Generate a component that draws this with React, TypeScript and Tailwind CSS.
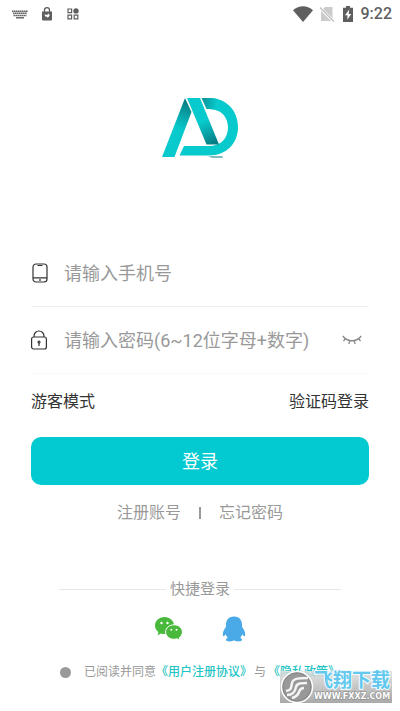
import { useState } from 'react';

function StatusBar() {
  return (
    <header className="flex h-7 items-center justify-between pr-2 pl-3 text-[#5f5f5f]">
      <div className="flex items-center gap-3">
        <svg width="16" height="9" viewBox="0 0 16 9" fill="none" stroke="currentColor" aria-hidden="true">
          <path d="M0 1.2h16M1 3.3h14M1.5 5.4h13" strokeWidth="1.5" strokeDasharray="1.6 .4" />
          <path d="M4 7.8h8" strokeWidth="1.4" />
        </svg>
        <svg width="12" height="14" viewBox="0 0 12 14" aria-hidden="true" className="ml-px">
          <path d="M3.5 5V3.2a2.5 2.5 0 0 1 5 0V5" fill="none" stroke="currentColor" strokeWidth="1.3" />
          <path d="M1 4.5h10V12.4a1 1 0 0 1-1 1H2a1 1 0 0 1-1-1z" fill="currentColor" />
          <path d="M3.5 7.2 6 8l1.6-1.4 1.2 2L6.7 11 6 9.8 4.2 9.4z" fill="#fff" />
        </svg>
        <svg width="12" height="12" viewBox="0 0 12 12" fill="none" stroke="currentColor" strokeWidth="1.2" aria-hidden="true" className="ml-0.5">
          <path d="M1 1h3.6v3.6H1zM1 7.2h3.6v3.6H1zM7.2 7.2h3.6v3.6H7.2z" />
          <circle cx="9" cy="2.9" r="2.7" fill="currentColor" stroke="none" />
        </svg>
      </div>
      <div className="flex items-center">
        <svg width="20" height="16" viewBox="0 0 20 16" fill="currentColor" aria-hidden="true">
          <path d="M0 4.2C6-1 14-1 20 4.2L10 16z" />
        </svg>
        <svg width="16" height="16" viewBox="0 0 16 16" aria-hidden="true" className="ml-1.5">
          <path d="M6 1h7.5v14H2V5z" fill="#cbcbcb" />
          <path d="M.5 1.5 15 15.5" stroke="#fff" strokeWidth="3" />
          <path d="M1 1.5 15 15.5" stroke="#bdbdbd" strokeWidth="1.3" />
        </svg>
        <svg width="10" height="16" viewBox="0 0 10 16" aria-hidden="true" className="ml-2">
          <path d="M3 0h4v1.7h3V16H0V1.7h3z" fill="currentColor" />
          <path d="M6.2 3.5 2 9.2h2.4v4.5L8.2 8H5.7z" fill="#fff" />
        </svg>
        <time className="ml-2 text-base leading-5 font-medium">9:22</time>
      </div>
    </header>
  );
}

function Logo() {
  return (
    <svg width="76" height="60" viewBox="0 0 76 60" role="img" aria-label="AD" className="mx-auto">
      <defs>
        <linearGradient id="leftLeg" gradientUnits="userSpaceOnUse" x1="28" y1="6" x2="17" y2="30">
          <stop offset="0" stopColor="#087f84" />
          <stop offset="1" stopColor="#08c9cb" />
        </linearGradient>
        <linearGradient id="rightLeg" gradientUnits="userSpaceOnUse" x1="40" y1="24" x2="50" y2="47">
          <stop offset="0" stopColor="#08c9cb" />
          <stop offset="1" stopColor="#067b81" />
        </linearGradient>
        <linearGradient id="bowl" gradientUnits="userSpaceOnUse" x1="42" y1="6" x2="54" y2="8">
          <stop offset="0" stopColor="#0a9a9f" />
          <stop offset="1" stopColor="#08c9cb" />
        </linearGradient>
      </defs>
      <path d="M47 0C65 0 76 13 76 29S65 57.5 47 57.5H17.5L22 48H47C59 48 66 40 66 29.5S59 11 47 11z" fill="#08c9cb" />
      <path d="M39.5 0H47Q52 0 56 1.2V12.5Q52 11 47 11H44.5z" fill="url(#bowl)" />
      <path d="M23 0 0 59H12.5L29.5 14z" fill="url(#leftLeg)" />
      <path d="M25 0H38L57 46.500H44.5z" fill="url(#rightLeg)" />
      <path d="M46 58.5H60.5L61 59.5H50z" fill="#067b81" />
    </svg>
  );
}

function PhoneIcon() {
  return (
    <svg width="16" height="20" viewBox="0 0 16 20" fill="none" stroke="#333" strokeWidth="1.2" aria-hidden="true">
      <rect x="1" y="1" width="14" height="18" rx="3" />
      <path d="M1 14.8h14M5.5 2.5h5M8 16v2" />
    </svg>
  );
}

function LockIcon() {
  return (
    <svg width="16" height="20" viewBox="0 0 16 20" fill="none" stroke="#333" strokeWidth="1.2" aria-hidden="true">
      <rect x="0.6" y="7" width="14.8" height="12" rx="2" />
      <path d="M3 7V6a5 5 0 0 1 10 0v1M8 13v3" />
      <circle cx="8" cy="12" r="1" />
    </svg>
  );
}

function ClosedEyeIcon() {
  return (
    <svg width="20" height="10" viewBox="0 0 20 10" fill="none" stroke="#888" strokeWidth="1.3" aria-hidden="true">
      <path d="M.8 1C5.5 7.3 14.5 7.3 19.2 1M3.5 3.5 1.5 6M7.6 5.5 7 9M12.4 5.5 13 9M16.5 3.5l2 2.5" />
    </svg>
  );
}

function WeChatIcon() {
  return (
    <svg width="28" height="24" viewBox="0 0 28 24" aria-hidden="true">
      <path d="M9.5 0C4.3 0 0 3.7 0 8.4c0 2.700 1.300 5 3.500 6.600L2.500 18.300l3.600-1.900c1.200.4 2.300.5 3.400.5C14.700 16.900 19 13.100 19 8.400S14.700 0 9.500 0z" fill="#48b93b" />
      <path d="M19 7.800c-4.600 0-8.400 3.200-8.400 7.200s3.800 7.300 8.400 7.300c1 0 2-.2 2.900-.5l3 1.700-.8-2.700c2-1.300 3.300-3.400 3.300-5.800 0-4-3.800-7.200-8.400-7.200z" fill="#48b93b" stroke="#fff" strokeWidth="1" />
      <g fill="#fff">
        <circle cx="6.5" cy="6" r="1.2" />
        <circle cx="12.5" cy="6" r="1.2" />
        <circle cx="16.3" cy="12.700" r="1" />
        <circle cx="21.5" cy="12.700" r="1" />
      </g>
    </svg>
  );
}

function QQIcon() {
  return (
    <svg width="24" height="26" viewBox="0 0 24 26" fill="#4aaae8" aria-hidden="true">
      <path d="M12 .5c-5 0-8 3.5-8 8v2.3C2.2 13.300.8 16 .8 18.300c0 1.200.3 1.900.8 1.900.7 0 1.500-.9 2.200-1.900.3 1.500 1 2.800 2 3.800-1.200.4-1.900 1-1.900 1.700 0 1.100 1.700 1.700 4 1.700 1.800 0 3.300-.5 4.100-1.200.8.7 2.300 1.200 4.100 1.200 2.300 0 4-.6 4-1.700 0-.7-.7-1.300-1.900-1.700 1-1 1.700-2.300 2-3.800.7 1 1.500 1.900 2.200 1.900.5 0 .8-.7.8-1.900 0-2.300-1.400-5-3.200-7.500V8.500c0-4.500-3-8-8-8z" />
    </svg>
  );
}

function Watermark() {
  return (
    <div className="absolute right-2 bottom-2 flex h-8 w-28 items-center bg-linear-to-b from-[#dedede]/80 to-[#a9a9a9]">
      <svg width="34" height="34" viewBox="0 0 34 34" aria-hidden="true" className="shrink-0">
        <circle cx="17" cy="17" r="15.5" fill="#999" stroke="#fff" strokeWidth="1.5" />
        <circle cx="17" cy="17" r="14" fill="none" stroke="#888" strokeWidth="1" />
        <path d="M28 8c-8 0-15 0-16 5-1 4 0 7-6 8M27 13c-6 0-10 0-11 4-1 5-3 8-9 8M24 18c-4 0-4 2-5 4-1 3-3 5-7 6" fill="none" stroke="#f4f4f4" strokeWidth="2.5" />
      </svg>
      <div className="flex flex-col">
        <span className="text-[19px] leading-5 font-bold whitespace-nowrap text-[#62c8ee] [paint-order:stroke] [-webkit-text-stroke:2px_#f3fbff]">飞翔下载</span>
        <span className="font-['DejaVu_Sans',sans-serif] text-[8px] leading-3 font-bold text-white [paint-order:stroke] [-webkit-text-stroke:1px_#888]">WWW.FXXZ.COM</span>
      </div>
    </div>
  );
}

export default function App() {
  const [visible, setVisible] = useState(false);
  const field = 'h-full min-w-0 flex-1 bg-transparent text-lg text-[#333] outline-none placeholder:text-[#999]';

  return (
    <div className="relative min-h-screen bg-white font-[Roboto,'Noto_Sans_CJK_SC',sans-serif] text-[#999]">
      <StatusBar />
      <main className="px-[31px] pt-[70px]">
        <Logo />
        <form className="mt-[82px]" onSubmit={(event) => event.preventDefault()}>
          <div className="flex h-[67px] items-center gap-4 border-b border-[#f0f0f0]">
            <label htmlFor="phone" aria-label="手机号" className="pl-px"><PhoneIcon /></label>
            <input id="phone" type="tel" placeholder="请输入手机号" className={field} />
          </div>
          <div className="flex h-[67px] items-center gap-4 border-b border-[#f8f8f8]">
            <label htmlFor="password" aria-label="密码" className="pr-px"><LockIcon /></label>
            <input id="password" type={visible ? 'text' : 'password'} placeholder="请输入密码(6~12位字母+数字)" className={field} />
            <button type="button" aria-label="显示密码" onClick={() => setVisible(!visible)} className="pr-[7px]">
              <ClosedEyeIcon />
            </button>
          </div>
          <div className="flex h-14 items-center justify-between text-base text-[#333]">
            <a href="#guest">游客模式</a>
            <a href="#code">验证码登录</a>
          </div>
          <button type="submit" className="mt-[7px] h-12 w-full rounded-[10px] bg-[#02cad0] pt-0.5 text-lg text-white">登录</button>
        </form>
        <nav className="flex h-14 items-center justify-center text-base">
          <a href="#register">注册账号</a>
          <span className="mx-[18px] h-3 w-0.5 bg-[#999]" />
          <a href="#forgot">忘记密码</a>
        </nav>
        <div className="mt-9 flex items-center gap-1 px-7 text-[15px] leading-6">
          <span className="h-px flex-1 bg-[#e8e8e8]" />
          <h2>快捷登录</h2>
          <span className="h-px flex-1 bg-[#e8e8e8]" />
        </div>
        <div className="mt-[15px] flex items-center justify-center gap-[39px]">
          <button type="button" aria-label="微信登录"><WeChatIcon /></button>
          <button type="button" aria-label="QQ登录"><QQIcon /></button>
        </div>
        <div className="mt-5 flex items-center justify-center text-xs leading-5">
          <input id="agree" type="checkbox" className="mr-[13px] size-[11px] appearance-none rounded-full bg-[#999] checked:bg-[#02cad0]" />
          <label htmlFor="agree">已阅读并同意</label>
          <a href="#terms" className="font-medium text-[#1fc4c4]">《用户注册协议》</a>
          <span className="mx-0.5">与</span>
          <a href="#privacy" className="font-medium text-[#1fc4c4]">《隐私政策》</a>
        </div>
      </main>
      <Watermark />
    </div>
  );
}
